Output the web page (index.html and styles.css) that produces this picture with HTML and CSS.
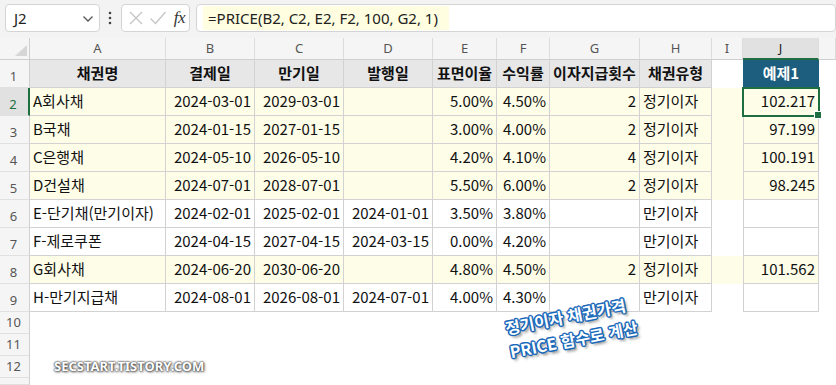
FILE: index.html
```html
<!DOCTYPE html>
<html lang="ko">
<head>
<meta charset="utf-8">
<link rel="stylesheet" href="styles.css">
</head>
<body>
<div class="app">
  <div class="fbar">
    <div class="namebox"><span>J2</span>
      <svg class="chev" width="12" height="8" viewBox="0 0 12 8"><polyline points="1.5,1.5 6,6 10.5,1.5" fill="none" stroke="#555" stroke-width="1.3"/></svg>
    </div>
    <div class="dots"><svg width="4" height="14" viewBox="0 0 4 14"><circle cx="2" cy="2" r="1.3" fill="#444"/><circle cx="2" cy="7" r="1.3" fill="#444"/><circle cx="2" cy="12" r="1.3" fill="#444"/></svg></div>
    <div class="fnbox">
      <svg width="16" height="16" viewBox="0 0 16 16"><path d="M2 2 L14 14 M14 2 L2 14" stroke="#c4c4c4" stroke-width="1.3" fill="none"/></svg>
      <svg width="18" height="16" viewBox="0 0 18 16"><path d="M1.5 8.5 L6.5 13.5 L16.5 2" stroke="#c4c4c4" stroke-width="1.3" fill="none"/></svg>
      <span class="fx">fx</span>
    </div>
    <div class="formula"><span class="hl">=PRICE(B2, C2, E2, F2, 100, G2, 1)</span></div>
  </div>

  <div class="sheet">
    <div class="corner"><svg width="30" height="22" viewBox="0 0 30 22"><polygon points="27,7 27,18 15,18" fill="#d6d6d6"/></svg></div>
    <div class="ch">A</div><div class="ch">B</div><div class="ch">C</div><div class="ch">D</div><div class="ch">E</div><div class="ch">F</div><div class="ch">G</div><div class="ch">H</div><div class="ch">I</div><div class="ch sel">J</div><div class="ch"></div>

    <div class="rh">1</div>
    <div class="c b hd">채권명</div><div class="c b hd">결제일</div><div class="c b hd">만기일</div><div class="c b hd">발행일</div><div class="c b hd">표면이율</div><div class="c b hd">수익률</div><div class="c b hd">이자지급횟수</div><div class="c b hd">채권유형</div><div class="c"></div><div class="c j jh">예제1</div><div class="c"></div>

    <div class="rh rsel">2</div>
    <div class="c b y">A회사채</div><div class="c b y r">2024-03-01</div><div class="c b y r">2029-03-01</div><div class="c b y r"></div><div class="c b y r">5.00%</div><div class="c b y r">4.50%</div><div class="c b y r">2</div><div class="c b y">정기이자</div><div class="c y"></div><div class="c j y r active">102.217</div><div class="c"></div>

    <div class="rh">3</div>
    <div class="c b y">B국채</div><div class="c b y r">2024-01-15</div><div class="c b y r">2027-01-15</div><div class="c b y r"></div><div class="c b y r">3.00%</div><div class="c b y r">4.00%</div><div class="c b y r">2</div><div class="c b y">정기이자</div><div class="c y"></div><div class="c j y r">97.199</div><div class="c"></div>

    <div class="rh">4</div>
    <div class="c b y">C은행채</div><div class="c b y r">2024-05-10</div><div class="c b y r">2026-05-10</div><div class="c b y r"></div><div class="c b y r">4.20%</div><div class="c b y r">4.10%</div><div class="c b y r">4</div><div class="c b y">정기이자</div><div class="c y"></div><div class="c j y r">100.191</div><div class="c"></div>

    <div class="rh">5</div>
    <div class="c b y">D건설채</div><div class="c b y r">2024-07-01</div><div class="c b y r">2028-07-01</div><div class="c b y r"></div><div class="c b y r">5.50%</div><div class="c b y r">6.00%</div><div class="c b y r">2</div><div class="c b y">정기이자</div><div class="c y"></div><div class="c j y r">98.245</div><div class="c"></div>

    <div class="rh">6</div>
    <div class="c b">E-단기채(만기이자)</div><div class="c b r">2024-02-01</div><div class="c b r">2025-02-01</div><div class="c b r">2024-01-01</div><div class="c b r">3.50%</div><div class="c b r">3.80%</div><div class="c b r"></div><div class="c b">만기이자</div><div class="c"></div><div class="c j r"></div><div class="c"></div>

    <div class="rh">7</div>
    <div class="c b">F-제로쿠폰</div><div class="c b r">2024-04-15</div><div class="c b r">2027-04-15</div><div class="c b r">2024-03-15</div><div class="c b r">0.00%</div><div class="c b r">4.20%</div><div class="c b r"></div><div class="c b">만기이자</div><div class="c"></div><div class="c j r"></div><div class="c"></div>

    <div class="rh">8</div>
    <div class="c b y">G회사채</div><div class="c b y r">2024-06-20</div><div class="c b y r">2030-06-20</div><div class="c b y r"></div><div class="c b y r">4.80%</div><div class="c b y r">4.50%</div><div class="c b y r">2</div><div class="c b y">정기이자</div><div class="c y"></div><div class="c j y r">101.562</div><div class="c"></div>

    <div class="rh">9</div>
    <div class="c b">H-만기지급채</div><div class="c b r">2024-08-01</div><div class="c b r">2026-08-01</div><div class="c b r">2024-07-01</div><div class="c b r">4.00%</div><div class="c b r">4.30%</div><div class="c b r"></div><div class="c b">만기이자</div><div class="c"></div><div class="c j r"></div><div class="c"></div>

    <div class="rh">10</div><div class="blank"></div>
    <div class="rh">11</div><div class="blank"></div>
    <div class="rh">12</div><div class="blank"></div>
    <div class="rh"></div><div class="blank"></div>
  </div>

  <div class="note">정기이자 채권가격<br>PRICE 함수로 계산</div>
  <div class="wm">SECSTART.TISTORY.COM</div>
</div>
</body>
</html>
```

FILE: styles.css
```css
* { box-sizing: border-box; }
html, body { margin: 0; padding: 0; }
body {
  width: 836px;
  height: 385px;
  overflow: hidden;
  background: #ffffff;
  font-family: "Noto Sans CJK KR", "Noto Sans", sans-serif;
}
.app {
  position: relative;
  width: 836px;
  height: 385px;
  overflow: hidden;
}

/* formula bar */
.fbar {
  height: 38px;
  background: #f3f3f3;
  display: flex;
  align-items: flex-start;
  padding-top: 4px;
  overflow: hidden;
}
.namebox {
  margin-left: 5px;
  width: 101px;
  height: 28px;
  background: #fff;
  border: 1px solid #d4d4d4;
  border-radius: 4px;
  display: flex;
  align-items: center;
  justify-content: space-between;
  padding: 0 5px 0 8px;
  font-family: "Noto Sans", sans-serif;
  font-size: 15px;
  color: #222;
}
.chev { margin-top: 1px; }
.dots {
  width: 22px;
  height: 28px;
  display: flex;
  align-items: center;
  justify-content: center;
}
.fnbox {
  width: 72px;
  height: 28px;
  background: #fff;
  border: 1px solid #d4d4d4;
  border-radius: 4px;
  display: flex;
  align-items: center;
  padding: 0 4px 0 6px;
  gap: 5px;
}
.fx {
  font-family: "Liberation Serif", serif;
  font-style: italic;
  font-size: 17px;
  color: #333;
  margin-left: 2px;
  letter-spacing: -0.5px;
}
.formula {
  margin-left: 6px;
  width: 640px;
  flex: none;
  height: 28px;
  background: #fff;
  border: 1px solid #d4d4d4;
  border-radius: 4px;
  padding: 1px 0 1px 6px;
  display: flex;
  align-items: stretch;
}
.hl {
  background: #fffee0;
  padding: 0 11px 0 5px;
  font-family: "Noto Sans", sans-serif;
  font-size: 15px;
  color: #222;
  line-height: 24px;
}

/* sheet */
.sheet {
  display: grid;
  grid-template-columns: 30px 136px 89px 89px 89px 64px 53px 90px 72px 31px 76px 1fr;
  grid-template-rows: 22px repeat(9, 28px) repeat(3, 22px) 1fr;
  height: 347px;
  background: #fff;
}
.corner {
  background: #f5f5f5;
  border-right: 1px solid #cfcfcf;
  border-bottom: 1px solid #cfcfcf;
}
.corner svg { display: block; }
.ch {
  background: #f5f5f5;
  border-right: 1px solid #dcdcdc;
  border-bottom: 1px solid #cfcfcf;
  display: flex;
  align-items: center;
  justify-content: center;
  font-family: "Noto Sans", sans-serif;
  font-size: 13px;
  color: #555;
  padding-bottom: 1px;
}
.ch.sel {
  background: #e1e1e1;
  border-bottom: 2px solid #1e6e42;
  color: #222;
}
.rh {
  grid-column: 1;
  background: #f5f5f5;
  border-right: 1px solid #cfcfcf;
  border-bottom: 1px solid #e0e0e0;
  display: flex;
  align-items: flex-end;
  justify-content: center;
  font-family: "Noto Sans", sans-serif;
  font-size: 13px;
  color: #555;
  padding-bottom: 2px;
  padding-right: 2px;
}
.rh.rsel {
  background: #e1e1e1;
  border-right: 2px solid #1e6e42;
  color: #1e6e42;
}
.blank { grid-column: 2 / -1; }

.c {
  display: flex;
  align-items: flex-end;
  padding: 0 3px 4px 3px;
  font-size: 15px;
  line-height: 20px;
  color: #111;
  white-space: nowrap;
  overflow: hidden;
}
.b {
  border-right: 1px solid #d2d2d2;
  border-bottom: 1px solid #d2d2d2;
}
.j {
  border-left: 1px solid #d2d2d2;
  border-right: 1px solid #d2d2d2;
  border-bottom: 1px solid #d2d2d2;
}
.y { background: #fefde8; }
.r { justify-content: flex-end; }
.hd {
  background: #e7e7e7;
  font-weight: 700;
  justify-content: center;
  align-items: center;
  padding-bottom: 1px;
}
.jh {
  background: #1d5d7e;
  border-color: #1d5d7e;
  color: #fff;
  font-weight: 700;
  justify-content: center;
  align-items: center;
  padding-bottom: 1px;
}
.active {
  position: relative;
  overflow: visible;
  outline: 2px solid #1e6e42;
  outline-offset: -1px;
}
.active::after {
  content: "";
  position: absolute;
  right: -4px;
  bottom: -4px;
  width: 6px;
  height: 6px;
  background: #1e6e42;
  border: 1px solid #fff;
}

/* overlays */
.note {
  position: absolute;
  left: 503px;
  top: 316px;
  transform: rotate(-11deg);
  transform-origin: left top;
  font-size: 16px;
  font-weight: 700;
  line-height: 24px;
  color: #fff;
  white-space: nowrap;
  text-shadow:
    1.5px 0 0 #1a68bb, -1.5px 0 0 #1a68bb, 0 1.5px 0 #1a68bb, 0 -1.5px 0 #1a68bb,
    1px 1px 0 #1a68bb, -1px -1px 0 #1a68bb, 1px -1px 0 #1a68bb, -1px 1px 0 #1a68bb,
    2px 3px 3px rgba(0, 0, 0, 0.55);
}
.wm {
  position: absolute;
  left: 54px;
  top: 357px;
  font-family: "Noto Sans", sans-serif;
  font-size: 13px;
  font-weight: 700;
  letter-spacing: 0;
  color: #fff;
  text-shadow:
    0 0 2px #444, 0 0 2px #444, 1px 1px 3px rgba(0, 0, 0, 0.6);
}
```
